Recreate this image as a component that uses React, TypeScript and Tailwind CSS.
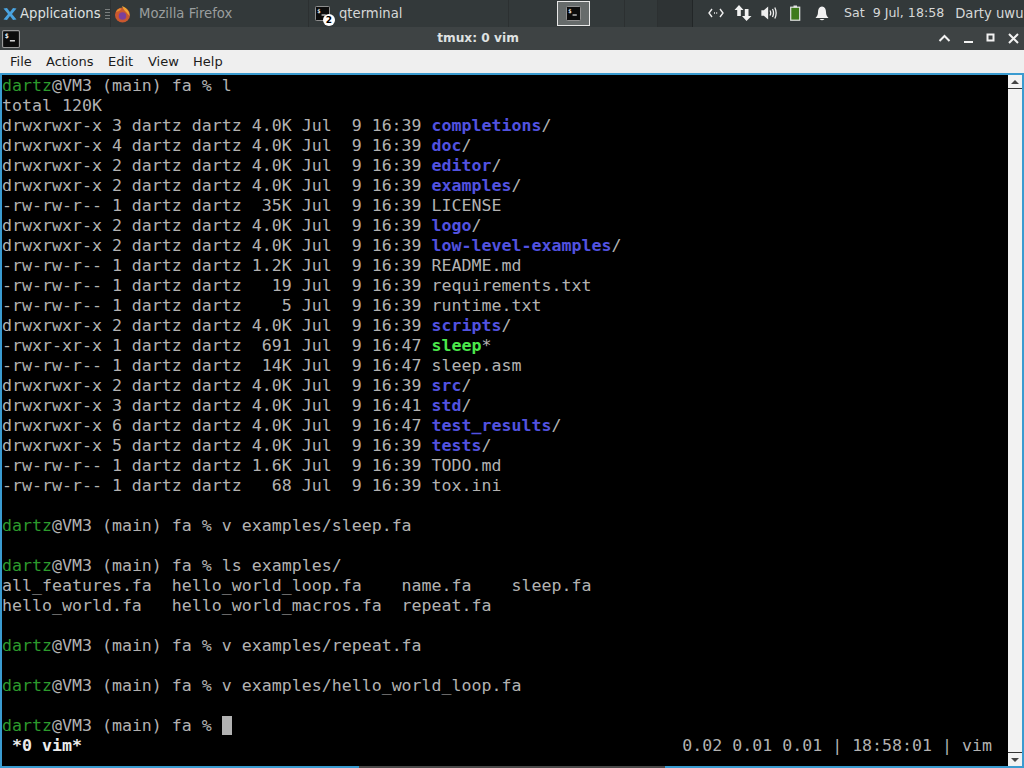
import React from "react";

const G = ({ c }: { c: string }) => <span className="text-[#2c9a2c]">{c}</span>;
const D = ({ c }: { c: string }) => <span className="font-bold text-[#5252e0]">{c}</span>;

function Prompt({ cmd, cursor }: { cmd?: string; cursor?: boolean }) {
  return (
    <>
      <G c="dartz" />
      {"@VM3 (main) fa % "}
      {cmd}
      {cursor && <span className="bg-[#b2b2b2]"> </span>}
    </>
  );
}

type Row = [string, string, string, string, string, "d" | "x" | "f"];
const rows: Row[] = [
  ["drwxrwxr-x", "3", "4.0K", "16:39", "completions", "d"],
  ["drwxrwxr-x", "4", "4.0K", "16:39", "doc", "d"],
  ["drwxrwxr-x", "2", "4.0K", "16:39", "editor", "d"],
  ["drwxrwxr-x", "2", "4.0K", "16:39", "examples", "d"],
  ["-rw-rw-r--", "1", " 35K", "16:39", "LICENSE", "f"],
  ["drwxrwxr-x", "2", "4.0K", "16:39", "logo", "d"],
  ["drwxrwxr-x", "2", "4.0K", "16:39", "low-level-examples", "d"],
  ["-rw-rw-r--", "1", "1.2K", "16:39", "README.md", "f"],
  ["-rw-rw-r--", "1", "  19", "16:39", "requirements.txt", "f"],
  ["-rw-rw-r--", "1", "   5", "16:39", "runtime.txt", "f"],
  ["drwxrwxr-x", "2", "4.0K", "16:39", "scripts", "d"],
  ["-rwxr-xr-x", "1", " 691", "16:47", "sleep", "x"],
  ["-rw-rw-r--", "1", " 14K", "16:47", "sleep.asm", "f"],
  ["drwxrwxr-x", "2", "4.0K", "16:39", "src", "d"],
  ["drwxrwxr-x", "3", "4.0K", "16:41", "std", "d"],
  ["drwxrwxr-x", "6", "4.0K", "16:47", "test_results", "d"],
  ["drwxrwxr-x", "5", "4.0K", "16:39", "tests", "d"],
  ["-rw-rw-r--", "1", "1.6K", "16:39", "TODO.md", "f"],
  ["-rw-rw-r--", "1", "  68", "16:39", "tox.ini", "f"],
];

function Line({ children }: { children?: React.ReactNode }) {
  return <div className="h-5 whitespace-pre leading-5">{children}</div>;
}

function TermIcon({ size = 14 }: { size?: number }) {
  return (
    <svg width={size} height={size} viewBox="0 0 16 16" className="shrink-0">
      <rect x="0.5" y="0.5" width="15" height="15" rx="1" fill="#0c0c0c" stroke="#9a9a9a" />
      <text x="2.5" y="7" fontSize="6" fontWeight="700" fill="#eee" fontFamily="'DejaVu Sans Mono', monospace">$</text>
      <rect x="7" y="9" width="4.5" height="1.2" fill="#eee" />
    </svg>
  );
}

export default function App() {
  return (
    <div className="flex h-[768px] w-[1024px] flex-col overflow-hidden bg-black font-['DejaVu_Sans',sans-serif]">
      {/* top panel */}
      <div className="flex h-[27px] shrink-0 items-center bg-[#33393a] text-[13.2px] text-[#d6d8d8]">
        <div className="flex h-full w-[110px] shrink-0 items-center overflow-hidden pl-[3px]">
          <svg width="14" height="14" viewBox="0 0 14 14" className="mr-[3px] shrink-0">
            <path d="M0.5 1.5 L4 1 L7 5 L10 1 L13.5 1.5 L9 7 L13.5 12.5 L10 13 L7 9 L4 13 L0.5 12.5 L5 7 Z" fill="#4aa3e0" />
          </svg>
          <span className="text-[#dfe1e1]">Applications</span>
          <div className="ml-[4px] flex flex-col gap-[2px]">
            <div className="h-px w-[5px] bg-[#7a7e7e]" />
            <div className="h-px w-[5px] bg-[#7a7e7e]" />
            <div className="h-px w-[5px] bg-[#7a7e7e]" />
            <div className="h-px w-[5px] bg-[#7a7e7e]" />
          </div>
        </div>
        <div className="flex h-full w-[199px] shrink-0 items-center border-x border-[#2c3031] pl-[3px] text-[#9a9e9e]">
          <svg width="17" height="18" viewBox="0 0 17 18" className="mr-[8px] shrink-0">
            <circle cx="8.5" cy="10" r="7.5" fill="#c9582f" />
            <circle cx="8.5" cy="11" r="3.8" fill="#7a3f9c" />
            <path d="M8 1 C12.5 2.5 15.5 6 15.5 11 C13 7.5 10 6 8 1Z" fill="#eda334" />
            <path d="M2 7 C3.5 3.5 6 3 7.5 4 C6 6 4 6.5 2 7Z" fill="#e58a30" />
          </svg>
          <span>Mozilla Firefox</span>
        </div>
        <div className="flex h-full w-[200px] shrink-0 items-center border-r border-[#2c3031] pl-[6px]">
          <div className="relative mr-[9px] h-[15px] w-[15px] shrink-0">
            <TermIcon size={15} />
            <span className="absolute -right-[5px] -bottom-[5px] flex h-[12px] w-[12px] items-center justify-center rounded-full bg-white text-[9px] font-bold leading-none text-black">2</span>
          </div>
          <span>qterminal</span>
        </div>
        <div className="h-full w-[48px] shrink-0" />
        <div className="flex h-[25px] w-[33px] shrink-0 items-center justify-center border border-[#e8e8e8] bg-[#666b6b]">
          <TermIcon size={15} />
        </div>
        <div className="h-full w-[35px] shrink-0 border-r border-[#2c3031]" />
        <div className="h-full w-[33px] shrink-0 border-r border-[#2c3031]" />
        <div className="h-full w-[35px] shrink-0 border-r border-[#222627] bg-[#2e3334]" />
        <div className="flex min-w-0 flex-1 items-center">
          <svg width="16" height="10" viewBox="0 0 16 10" className="ml-[15px] shrink-0" fill="none" stroke="#eee" strokeWidth="1.4">
            <path d="M4 1 L1 5 L4 9 M12 1 L15 5 L12 9" />
            <path d="M6 5 H10" strokeDasharray="1 1.2" />
          </svg>
          <svg width="18" height="18" viewBox="0 0 18 18" className="ml-[10px] shrink-0" fill="#f2f2f2">
            <path d="M5 1 L9.5 6 H6.8 V12 H3.2 V6 H0.5 Z" />
            <path d="M12.5 17 L17.5 12 H14.5 V5 H10.8 V12 H8 Z" />
          </svg>
          <svg width="16" height="14" viewBox="0 0 16 14" className="ml-[9px] shrink-0" fill="none" stroke="#eee" strokeWidth="1.3">
            <path d="M1 5 H3 L6.5 2 V12 L3 9 H1 Z" fill="#eee" />
            <path d="M9 4.5 Q10.5 7 9 9.5 M11.5 3 Q13.5 7 11.5 11 M13.8 1.5 Q16.5 7 13.8 12.5" />
          </svg>
          <svg width="11" height="16" viewBox="0 0 11 16" className="ml-[13px] shrink-0">
            <rect x="0.7" y="2.2" width="9" height="13" fill="#3f7a1c" stroke="#e4e4e4" strokeWidth="1.2" />
            <rect x="3.5" y="0.5" width="3.5" height="2" fill="#e4e4e4" />
          </svg>
          <svg width="14" height="15" viewBox="0 0 14 15" className="ml-[14px] shrink-0" fill="#f2f2f2">
            <path d="M7 0.5 C9.8 0.8 11 3 11 6 C11 9 12 10.5 13.5 12 H0.5 C2 10.5 3 9 3 6 C3 3 4.2 0.8 7 0.5Z" />
            <path d="M4.5 13 H9.5 Q7 15.5 4.5 13Z" />
          </svg>
          <span className="ml-[15px] shrink-0 whitespace-pre text-[12.6px]">Sat  9 Jul, 18:58</span>
          <span className="ml-[11px] shrink-0 whitespace-pre">Darty uwu</span>
        </div>
      </div>

      {/* title bar */}
      <div className="flex h-[23px] shrink-0 items-center bg-[#3e4344] pl-[2px] text-[#dfe1e1]">
        <TermIcon size={18} />
        <div className="flex-1 pr-[2px] text-center text-[12.2px] font-bold">tmux: 0 vim</div>
        <div className="flex items-center pr-[5px]">
          <svg width="13" height="9" viewBox="0 0 13 9" fill="none" stroke="#f2f2f2" strokeWidth="2"><path d="M1.5 7 L6.5 2 L11.5 7" /></svg>
          <svg width="13" height="12" viewBox="0 0 13 12" fill="#f2f2f2" className="ml-[11px]"><rect x="2" y="8" width="9" height="2" /></svg>
          <svg width="9" height="9" viewBox="0 0 9 9" fill="none" stroke="#f2f2f2" strokeWidth="2" className="ml-[11px] -translate-y-px"><rect x="1.5" y="1.5" width="6" height="6" /></svg>
          <svg width="11" height="11" viewBox="0 0 11 11" fill="none" stroke="#f2f2f2" strokeWidth="2" className="ml-[13px]"><path d="M1 1 L10 10 M10 1 L1 10" /></svg>
        </div>
      </div>

      {/* menu bar */}
      <div className="flex h-[23px] shrink-0 items-center bg-[#efefef] pl-[10px] text-[13px] text-[#1c1c1c]">
        <span className="w-[36px]">File</span>
        <span className="w-[62px]">Actions</span>
        <span className="w-[40px]">Edit</span>
        <span className="w-[45px]">View</span>
        <span>Help</span>
      </div>

      {/* terminal */}
      <div className="flex min-h-0 flex-1 border-x-2 border-t-2 border-[#3a9bd0]">
        <div className="flex min-w-0 flex-1 flex-col bg-black pt-px font-['DejaVu_Sans_Mono',monospace] text-[16.6px] text-[#b2b2b2]">
          <Line><Prompt cmd="l" /></Line>
          <Line>total 120K</Line>
          {rows.map((r) => (
            <Line key={r[4]}>
              {`${r[0]} ${r[1]} dartz dartz ${r[2]} Jul  9 ${r[3]} `}
              {r[5] === "d" ? (
                <>
                  <D c={r[4]} />/
                </>
              ) : r[5] === "x" ? (
                <>
                  <span className="font-bold text-[#4be84b]">{r[4]}</span>*
                </>
              ) : (
                r[4]
              )}
            </Line>
          ))}
          <Line />
          <Line><Prompt cmd="v examples/sleep.fa" /></Line>
          <Line />
          <Line><Prompt cmd="ls examples/" /></Line>
          <Line>{"all_features.fa  hello_world_loop.fa    name.fa    sleep.fa"}</Line>
          <Line>{"hello_world.fa   hello_world_macros.fa  repeat.fa"}</Line>
          <Line />
          <Line><Prompt cmd="v examples/repeat.fa" /></Line>
          <Line />
          <Line><Prompt cmd="v examples/hello_world_loop.fa" /></Line>
          <Line />
          <Line><Prompt cursor /></Line>
          <div className="flex h-5 justify-between whitespace-pre pr-[16px] leading-5">
            <span className="pl-[10px] font-bold text-[#ececec]">*0 vim*</span>
            <span>0.02 0.01 0.01 | 18:58:01 | vim</span>
          </div>
        </div>
        {/* scrollbar */}
        <div className="flex w-[14px] shrink-0 flex-col bg-[#f2f2f2]">
          <div className="flex h-[14px] items-center justify-center border-b border-[#333]">
            <div className="h-0 w-0 border-x-[4px] border-b-[4px] border-x-transparent border-b-[#444]" />
          </div>
          <div className="flex-1" />
          <div className="flex h-[14px] items-center justify-center border-t border-[#333]">
            <div className="h-0 w-0 border-x-[4px] border-t-[4px] border-x-transparent border-t-[#444]" />
          </div>
        </div>
      </div>
      <div className="flex h-[2px] shrink-0">
        <div className="w-[359px] bg-[#3a9bd0]" />
        <div className="w-[306px] bg-[#4a4a4a]" />
        <div className="flex-1 bg-[#3a9bd0]" />
      </div>
    </div>
  );
}
